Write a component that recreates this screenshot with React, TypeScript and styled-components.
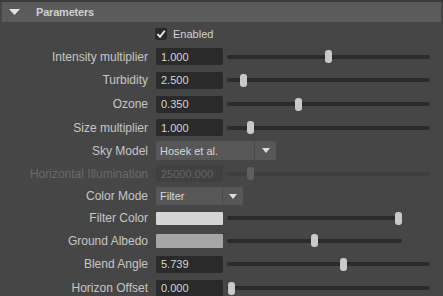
import React from "react";
import styled, { createGlobalStyle, css } from "styled-components";

const GlobalStyle = createGlobalStyle`
  html, body {
    margin: 0;
    padding: 0;
    background: #464646;
  }
  body {
    font-family: "Liberation Sans", Arial, sans-serif;
  }
`;

type Kind = "number" | "dropdown" | "swatch";

interface ParamRow {
  label: string;
  kind: Kind;
  h: number;
  value?: string;
  color?: string;
  thumb?: number;
  track?: number;
  ddWidth?: number;
  arrowWidth?: number;
  ddHeight?: number;
  swatchHeight?: number;
  disabled?: boolean;
}

const rows: ParamRow[] = [
  { label: "Intensity multiplier", kind: "number", h: 23, value: "1.000", thumb: 98 },
  { label: "Turbidity", kind: "number", h: 24, value: "2.500", thumb: 13 },
  { label: "Ozone", kind: "number", h: 24, value: "0.350", thumb: 68 },
  { label: "Size multiplier", kind: "number", h: 23, value: "1.000", thumb: 20 },
  { label: "Sky Model", kind: "dropdown", h: 23, value: "Hosek et al.", ddWidth: 120, arrowWidth: 21, ddHeight: 19 },
  { label: "Horizontal Illumination", kind: "number", h: 23, value: "25000.000", thumb: 20, disabled: true },
  { label: "Color Mode", kind: "dropdown", h: 22, value: "Filter", ddWidth: 87, arrowWidth: 20, ddHeight: 18 },
  { label: "Filter Color", kind: "swatch", h: 22, color: "#d5d5d5", thumb: 168, track: 175, swatchHeight: 13 },
  { label: "Ground Albedo", kind: "swatch", h: 23, color: "#a6a6a6", thumb: 84, track: 175, swatchHeight: 14 },
  { label: "Blend Angle", kind: "number", h: 24, value: "5.739", thumb: 113 },
  { label: "Horizon Offset", kind: "number", h: 24, value: "0.000", thumb: 1 },
];

export default function App() {
  return (
    <>
      <GlobalStyle />
      <Page>
        <Header>
          <svg width="11" height="6" viewBox="0 0 11 6">
            <polygon points="0,0 11,0 5.5,6" fill="#e2e2e2" />
          </svg>
          <Title>Parameters</Title>
        </Header>

        <Row $h={23}>
          <span />
          <Controls>
            <CheckBox>
              <svg width="10" height="10" viewBox="0 0 10 10">
                <polyline
                  points="1.5,5.2 4,7.8 8.8,1.8"
                  fill="none"
                  stroke="#f0f0f0"
                  strokeWidth="1.8"
                />
              </svg>
            </CheckBox>
            <CheckText>Enabled</CheckText>
          </Controls>
        </Row>

        {rows.map((r) => (
          <Row key={r.label} $h={r.h}>
            <Label $disabled={r.disabled}>{r.label}</Label>
            <Controls>
              {r.kind === "number" && <Field $disabled={r.disabled}>{r.value}</Field>}
              {r.kind === "swatch" && <Swatch $color={r.color!} $h={r.swatchHeight!} />}
              {r.kind === "dropdown" && (
                <Dropdown $w={r.ddWidth!} $h={r.ddHeight!}>
                  <DropText>{r.value}</DropText>
                  <DropArrow $w={r.arrowWidth!}>
                    <svg width="8" height="5" viewBox="0 0 8 5">
                      <polygon points="0,0 8,0 4,5" fill="#dcdcdc" />
                    </svg>
                  </DropArrow>
                </Dropdown>
              )}
              {r.thumb !== undefined && (
                <Slider $w={r.track ?? 203}>
                  <Track $disabled={r.disabled} />
                  <Thumb $disabled={r.disabled} style={{ left: r.thumb }} />
                </Slider>
              )}
            </Controls>
          </Row>
        ))}
      </Page>
    </>
  );
}

const Page = styled.div`
  width: 443px;
  height: 296px;
  overflow: hidden;
  box-sizing: border-box;
  background: #464646;
  border-top: 2px solid #3b3b3b;
`;

const Header = styled.div`
  margin: 0 2px;
  height: 20px;
  background: #5b5b5b;
  display: flex;
  align-items: center;
  padding-left: 7px;
  gap: 16px;
`;

const Title = styled.span`
  font-size: 11px;
  font-weight: bold;
  letter-spacing: -0.2px;
  color: #cfcfcf;
`;

const Row = styled.div<{ $h: number }>`
  display: grid;
  grid-template-columns: 148px 1fr;
  column-gap: 8px;
  align-items: center;
  height: ${(p) => p.$h}px;
  padding-right: 13px;
`;

const Label = styled.span<{ $disabled?: boolean }>`
  text-align: right;
  white-space: nowrap;
  font-size: 12px;
  color: ${(p) => (p.$disabled ? "#6a6a6a" : "#c6c6c6")};
`;

const Controls = styled.div`
  display: flex;
  align-items: center;
  gap: 4px;
`;

const CheckBox = styled.div`
  width: 12px;
  height: 12px;
  border-radius: 2px;
  background: #2a2a2a;
  display: flex;
  align-items: center;
  justify-content: center;
  margin-left: -1px;
`;

const CheckText = styled.span`
  font-size: 11px;
  color: #d2d2d2;
  margin-left: 2px;
`;

const Field = styled.div<{ $disabled?: boolean }>`
  width: 67px;
  height: 17px;
  box-sizing: border-box;
  border-radius: 2px;
  padding-left: 5px;
  display: flex;
  align-items: center;
  font-size: 11px;
  ${(p) =>
    p.$disabled
      ? css`
          background: #404040;
          color: #666666;
        `
      : css`
          background: #2a2a2a;
          color: #d6d6d6;
        `}
`;

const Swatch = styled.div<{ $color: string; $h: number }>`
  width: 67px;
  height: ${(p) => p.$h}px;
  border-radius: 1px;
  background: ${(p) => p.$color};
`;

const Dropdown = styled.div<{ $w: number; $h: number }>`
  width: ${(p) => p.$w}px;
  height: ${(p) => p.$h}px;
  display: flex;
  background: #575757;
  border-radius: 2px;
`;

const DropText = styled.div`
  flex: 1;
  display: flex;
  align-items: center;
  padding-left: 4px;
  font-size: 11px;
  color: #d8d8d8;
`;

const DropArrow = styled.div<{ $w: number }>`
  width: ${(p) => p.$w}px;
  border-left: 1px solid #4a4a4a;
  display: flex;
  align-items: center;
  justify-content: center;
`;

const Slider = styled.div<{ $w: number }>`
  position: relative;
  width: ${(p) => p.$w}px;
  height: 13px;
  display: flex;
  align-items: center;
`;

const Track = styled.div<{ $disabled?: boolean }>`
  width: 100%;
  height: 4px;
  border-radius: 2px;
  background: ${(p) => (p.$disabled ? "#3f3f3f" : "#2b2b2b")};
`;

const Thumb = styled.div<{ $disabled?: boolean }>`
  position: absolute;
  top: 0;
  width: 7px;
  height: 13px;
  border-radius: 3px;
  background: ${(p) => (p.$disabled ? "#5f5f5f" : "#c9c9c9")};
`;
